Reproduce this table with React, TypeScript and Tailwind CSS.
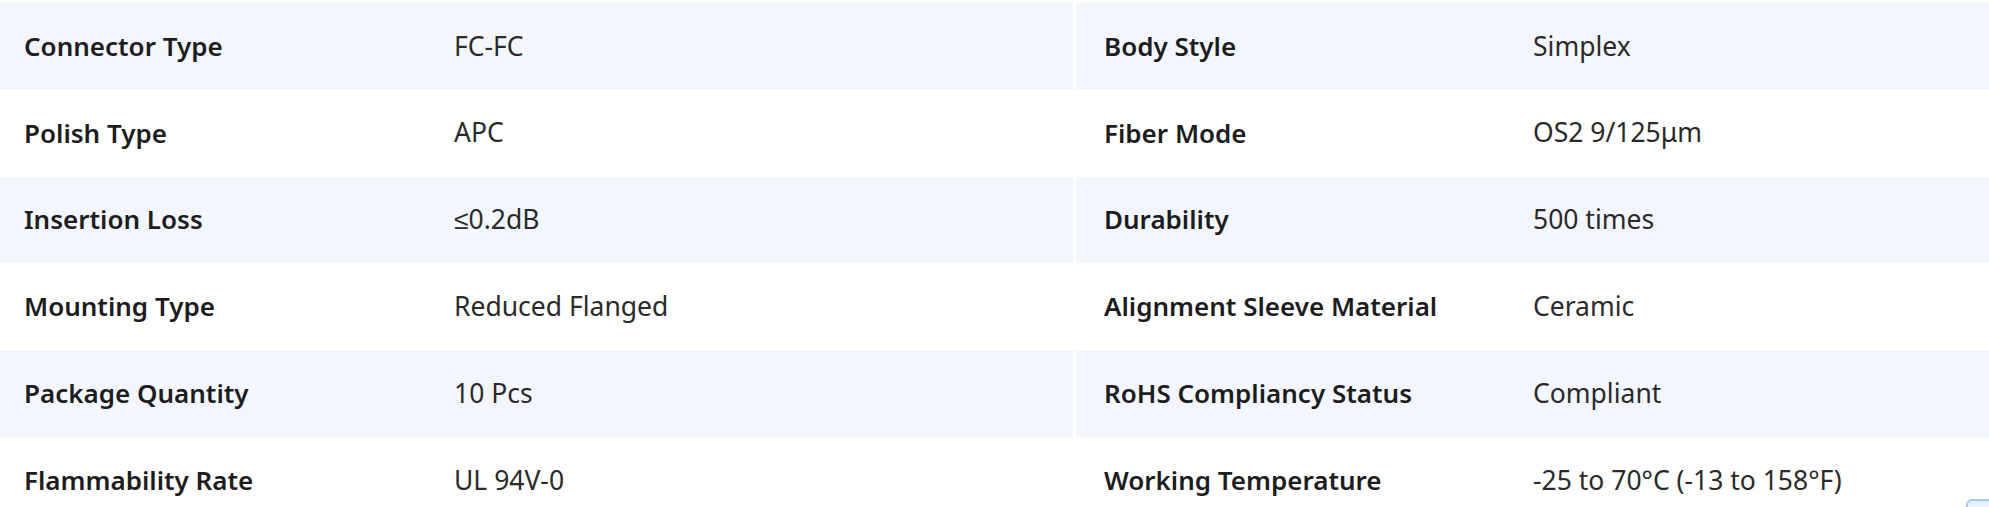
const specs: [string, string, string, string][] = [
  ["Connector Type", "FC-FC", "Body Style", "Simplex"],
  ["Polish Type", "APC", "Fiber Mode", "OS2 9/125μm"],
  ["Insertion Loss", "≤0.2dB", "Durability", "500 times"],
  ["Mounting Type", "Reduced Flanged", "Alignment Sleeve Material", "Ceramic"],
  ["Package Quantity", "10 Pcs", "RoHS Compliancy Status", "Compliant"],
  ["Flammability Rate", "UL 94V-0", "Working Temperature", "-25 to 70°C (-13 to 158°F)"],
];

export default function App() {
  return (
    <div className="relative h-[507px] w-full overflow-hidden bg-white pt-[3px] font-['Noto_Sans',sans-serif]">
      {specs.map((row, i) => {
        const bg = i % 2 === 0 ? "bg-[#f3f7fd]" : "bg-white";
        return (
          <div key={i} className="grid h-[86.8px] grid-cols-[1073px_1fr] gap-x-[3px]">
            <div className={`flex items-center ${bg}`}>
              <div className="w-[430px] shrink-0 pl-6 text-[26px] font-semibold text-[#1d1d1f]">{row[0]}</div>
              <div className="pl-6 text-[26.5px] text-[#2a2a2a]">{row[1]}</div>
            </div>
            <div className={`flex items-center ${bg}`}>
              <div className="w-[433px] shrink-0 pl-[28px] text-[26px] font-semibold text-[#1d1d1f]">{row[2]}</div>
              <div className="pl-6 text-[26.5px] text-[#2a2a2a]">{row[3]}</div>
            </div>
          </div>
        );
      })}

      {/* floating widget peeking in at the bottom corner */}
      <div className="absolute left-[1966px] top-[499px] h-10 w-10 rounded-md border-2 border-[#a8c8ee] bg-gradient-to-b from-[#e3efff] to-white" />
    </div>
  );
}
